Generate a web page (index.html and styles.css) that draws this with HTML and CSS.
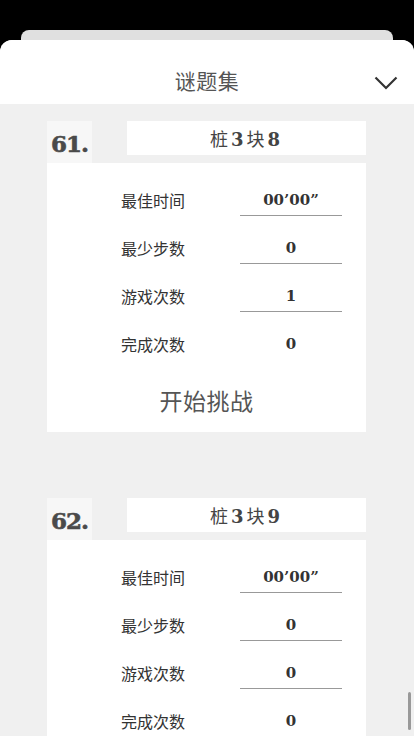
FILE: index.html
```html
<!DOCTYPE html>
<html>
<head>
<meta charset="utf-8">
<title>谜题集</title>
<link rel="stylesheet" href="styles.css">
</head>
<body>
<div class="backcard"></div>
<div class="sheet">
  <div class="sheet-head">
    <span class="sheet-title">谜题集</span>
    <svg class="chevron" width="24" height="14" viewBox="0 0 24 14">
      <path d="M1.5 1.5 L12 12 L22.5 1.5" fill="none" stroke="#333" stroke-width="2.2"/>
    </svg>
  </div>

  <div class="list">
    <div class="puzzle">
      <div class="puzzle-top">
        <div class="num">61.</div>
        <div class="name">桩<b>3</b>块<b>8</b></div>
      </div>
      <div class="puzzle-body">
        <div class="row"><span class="label">最佳时间</span><span class="value line">00’00”</span></div>
        <div class="row"><span class="label">最少步数</span><span class="value line">0</span></div>
        <div class="row"><span class="label">游戏次数</span><span class="value line">1</span></div>
        <div class="row"><span class="label">完成次数</span><span class="value">0</span></div>
        <div class="start">开始挑战</div>
      </div>
    </div>

    <div class="puzzle">
      <div class="puzzle-top">
        <div class="num">62.</div>
        <div class="name">桩<b>3</b>块<b>9</b></div>
      </div>
      <div class="puzzle-body">
        <div class="row"><span class="label">最佳时间</span><span class="value line">00’00”</span></div>
        <div class="row"><span class="label">最少步数</span><span class="value line">0</span></div>
        <div class="row"><span class="label">游戏次数</span><span class="value line">0</span></div>
        <div class="row"><span class="label">完成次数</span><span class="value">0</span></div>
        <div class="start">开始挑战</div>
      </div>
    </div>
  </div>

  <div class="scrollbar"></div>
</div>
</body>
</html>
```

FILE: styles.css
```css
html, body{
margin: 0;
height: 100%;
}
body{
background: #000;
overflow: hidden;
font-family: "Noto Sans CJK SC", "Noto Sans", sans-serif;
padding-top: 30px;
box-sizing: border-box;
}

.backcard{
margin: 0 21px;
height: 10px;
background: #e0e0e0;
border-radius: 8px 8px 0 0;
}

.sheet{
position: relative;
background: #f0f0f0;
border-radius: 12px 12px 0 0;
overflow: hidden;
height: 696px;
}

.sheet-head{
height: 64px;
background: #fff;
display: flex;
align-items: center;
justify-content: center;
position: relative;
}
.sheet-title{
font-size: 21px;
color: #555;
letter-spacing: 0.5px;
margin-top: 15px;
}
.chevron{
position: absolute;
right: 16px;
top: 36px;
}

.list{
padding: 17px 48px 0 47px;
}
.puzzle{
margin-bottom: 66px;
}

.puzzle-top{
display: flex;
height: 42px;
}
.num{
width: 45px;
background: #f7f7f7;
font-family: "DejaVu Serif", serif;
font-weight: 900;
font-size: 23px;
letter-spacing: -1px;
color: #4a4a4a;
padding: 8px 0 0 4px;
box-sizing: border-box;
line-height: 30px;
-webkit-text-stroke: 0.6px #4a4a4a;
}
.name{
flex: 1;
margin-left: 35px;
height: 34px;
background: #fff;
text-align: center;
line-height: 34px;
font-size: 18px;
color: #444;
letter-spacing: 3px;
}
.name b{
font-family: "DejaVu Serif", serif;
font-weight: bold;
}

.puzzle-body{
background: #fff;
padding-top: 13px;
}
.row{
display: flex;
align-items: center;
height: 48px;
}
.label{
flex: none;
width: 193px;
padding-left: 74px;
box-sizing: border-box;
white-space: nowrap;
font-size: 16px;
color: #333;
}
.value{
flex: none;
width: 102px;
height: 30px;
line-height: 30px;
text-align: center;
font-family: "DejaVu Serif", serif;
font-weight: bold;
font-size: 15px;
color: #333;
}
.value.line{
border-bottom: 1px solid #999;
}

.start{
height: 64px;
line-height: 64px;
text-align: center;
font-size: 23px;
color: #555;
letter-spacing: 0.5px;
}

.scrollbar{
position: absolute;
right: 3px;
top: 652px;
width: 3px;
height: 38px;
background: #999;
border-radius: 2px;
}
```
